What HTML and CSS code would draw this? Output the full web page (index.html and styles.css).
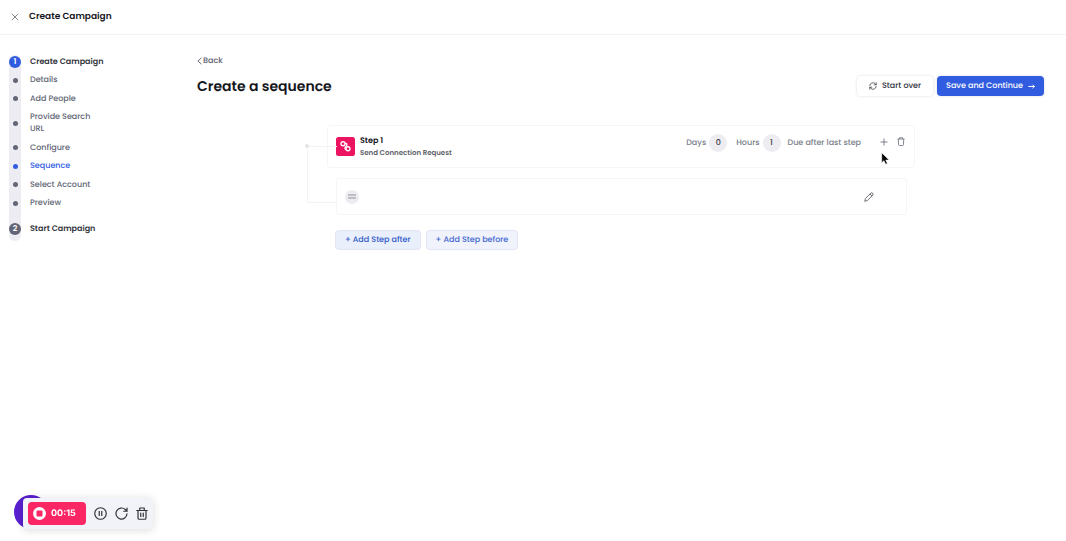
FILE: index.html
```html
<!DOCTYPE html>
<html lang="en">
<head>
<meta charset="utf-8">
<meta name="viewport" content="width=device-width, initial-scale=1">
<title>Create Campaign</title>
<link rel="stylesheet" href="styles.css">
</head>
<body>
<header class="topbar">
  <button class="icon-btn" type="button" aria-label="Close">
    <svg width="8" height="8" viewBox="0 0 8 8" fill="none" stroke="#777a82" stroke-width="0.9"><path d="M.8.8l6.4 6.4M7.2.8L.8 7.2"/></svg>
  </button>
  <span class="topbar-title">Create Campaign</span>
</header>
<div class="page">
  <nav class="progress" aria-label="Progress">
    <div class="stage"><span class="badge active">1</span><a href="#create">Create Campaign</a></div>
    <ul class="stage-items">
      <li><a href="#details">Details</a></li>
      <li><a href="#people">Add People</a></li>
      <li><a href="#url">Provide Search URL</a></li>
      <li><a href="#configure">Configure</a></li>
      <li class="current"><a href="#sequence">Sequence</a></li>
      <li><a href="#account">Select Account</a></li>
      <li><a href="#preview">Preview</a></li>
    </ul>
    <div class="stage"><span class="badge">2</span><a href="#start">Start Campaign</a></div>
  </nav>
  <main class="content">
    <a class="back" href="#back">
      <svg width="5" height="8" viewBox="0 0 5 8" fill="none" stroke="#5c6070" stroke-width="0.9"><path d="M4.5.8L.9 4l3.6 3.2"/></svg>
      Back
    </a>
    <div class="heading">
      <h1>Create a sequence</h1>
      <div class="actions">
        <button class="btn" type="button">
          <svg width="8" height="8" viewBox="0 0 20 20" fill="none" stroke="#3b3e48" stroke-width="1.9" stroke-linecap="round" stroke-linejoin="round"><path d="M2 9a8 8 0 0 1 14-4.500L18 7M18 2v5h-5M18 11a8 8 0 0 1-14 4.500L2 13M2 18v-5h5"/></svg>
          Start over
        </button>
        <button class="btn primary" type="button">
          Save and Continue
          <svg width="7" height="7" viewBox="0 0 14 14" fill="none" stroke="#fff" stroke-width="2" stroke-linecap="round" stroke-linejoin="round"><path d="M1.500 7h11M9.500 4l3 3-3 3"/></svg>
        </button>
      </div>
    </div>
    <section class="sequence">
      <article class="step">
        <svg class="step-icon" width="19" height="19" viewBox="0 0 38 38" fill="none">
          <rect width="38" height="38" rx="5" fill="#ec1460"/>
          <g stroke="#fff" stroke-width="2.600"><circle cx="14" cy="13.500" r="4"/><circle cx="24" cy="23.500" r="4"/><path d="M18 13c4.500-1 5 3 2 5.500s-3 6.500 1 6.500"/></g>
        </svg>
        <div class="step-text">
          <h2>Step 1</h2>
          <p>Send Connection Request</p>
        </div>
        <div class="timing">
          <label for="days">Days</label><input id="days" type="text" value="0">
          <label for="hours" class="hours">Hours</label><input id="hours" type="text" value="1">
          <span>Due after last step</span>
        </div>
        <div class="step-tools">
          <button class="icon-btn" type="button" aria-label="Add">
            <svg width="8" height="8" viewBox="0 0 8 8" fill="none" stroke="#71757f" stroke-width="0.900"><path d="M4 .5v7M.5 4h7"/></svg>
          </button>
          <button class="icon-btn" type="button" aria-label="Delete step">
            <svg width="8" height="9" viewBox="0 0 16 18" fill="none" stroke="#71757f" stroke-width="1.700" stroke-linejoin="round"><path d="M1 4h14M5 4V1.500h6V4M2.500 4l.7 11.500q.1 1.500 1.500 1.500h6.600q1.400 0 1.500-1.500L13.500 4"/></svg>
          </button>
        </div>
      </article>
      <article class="message">
        <span class="handle"><svg width="8" height="5" viewBox="0 0 8 5" stroke="#8d9099"><path d="M0 1h8M0 4h8"/></svg></span>
        <button class="icon-btn" type="button" aria-label="Edit">
          <svg width="10" height="10" viewBox="0 0 20 20" fill="none" stroke="#555862" stroke-width="1.700" stroke-linejoin="round"><path d="M1.500 18.500l1.300-5.300L14 2q1.700-1.200 3.200.3T17.800 6L6.700 17.200zM12 4l4 4"/></svg>
        </button>
      </article>
      <div class="add-row">
        <button class="btn soft hover" type="button">+ Add Step after</button>
        <button class="btn soft" type="button">+ Add Step before</button>
      </div>
    </section>
  </main>
</div>
<svg class="pointer" width="9" height="13" viewBox="0 0 9 13"><path d="M.7.7v10l2.300-2 1.600 3.600 1.800-.8-1.600-3.400h3.300z" fill="#050505" stroke="#fff" stroke-width="0.600"/></svg>
<div class="bubble"></div>
<div class="recorder">
  <button class="stop" type="button">
    <svg width="13" height="13" viewBox="0 0 13 13"><circle cx="6.500" cy="6.500" r="6.500" fill="#fff"/><rect x="3.500" y="3.500" width="6" height="6" rx="1" fill="#fb2765"/></svg>
    00:15
  </button>
  <button class="icon-btn" type="button" aria-label="Pause">
    <svg width="13" height="13" viewBox="0 0 26 26" fill="none" stroke="#30333b" stroke-width="2.400"><circle cx="13" cy="13" r="11.500"/><path d="M10.500 8v10M15.500 8v10"/></svg>
  </button>
  <button class="icon-btn" type="button" aria-label="Restart">
    <svg width="13" height="13" viewBox="0 0 26 26" fill="none" stroke="#30333b" stroke-width="2.400" stroke-linecap="round" stroke-linejoin="round"><path d="M24 13.500A11 11 0 1 1 20.500 5L24 8.500M24 2v6.500h-6.500"/></svg>
  </button>
  <button class="icon-btn" type="button" aria-label="Discard">
    <svg width="12" height="13" viewBox="0 0 24 26" fill="none" stroke="#30333b" stroke-width="2.400" stroke-linejoin="round" stroke-linecap="round"><path d="M1.500 7h21M7.500 7V2h9v5M4 7v15q0 2.500 2.500 2.500h11Q20 24.500 20 22V7M9.500 12v7M14.500 12v7"/></svg>
  </button>
</div>
</body>
</html>
```
FILE: styles.css
```css
* { box-sizing: border-box; }

body {
  margin: 0;
  min-height: 100vh;
  background: #fff;
  color: #15161c;
  font: 500 8px/12px Poppins, Inter, sans-serif;
  text-rendering: geometricPrecision;
  border-bottom: 1px solid #fafafb;
}

a { color: inherit; text-decoration: none; }
h1, h2, p, ul { margin: 0; padding: 0; }
button, input { font: inherit; color: inherit; text-rendering: inherit; }
svg { display: block; flex: none; }

.icon-btn {
  display: grid;
  place-items: center;
  padding: 0;
  border: 0;
  background: none;
}

.topbar {
  display: flex;
  align-items: center;
  gap: 10px;
  height: 35px;
  padding: 0 11px;
  border-bottom: 1px solid #f3f3f5;
}
.topbar-title { font-size: 9px; font-weight: 600; }

.page { display: flex; align-items: flex-start; }

.progress {
  position: relative;
  width: 94px;
  margin: 20px 94px 0 9px;
  padding-bottom: 6px;
  color: #626675;
}
.progress::before {
  content: "";
  position: absolute;
  z-index: -1;
  inset: 0 auto 0 0;
  width: 12px;
  border-radius: 6px;
  background: #ececf2;
}
.stage {
  display: flex;
  align-items: center;
  gap: 9px;
  height: 13px;
  color: #353742;
  font-weight: 600;
  white-space: nowrap;
}
.badge {
  display: grid;
  flex: none;
  place-items: center;
  width: 12px;
  height: 12px;
  border-radius: 50%;
  background: #626575;
  color: #fff;
}
.badge.active { background: #315ce0; }
.stage-items {
  display: flex;
  flex-direction: column;
  justify-content: space-between;
  min-height: 135px;
  margin: 6px 0 13px;
  list-style: none;
}
.stage-items li {
  display: flex;
  align-items: center;
  gap: 12px;
  padding-left: 4px;
}
.stage-items li::before {
  content: "";
  flex: none;
  width: 5px;
  height: 5px;
  border-radius: 50%;
  background: currentColor;
}
.stage-items .current { color: #315ce0; }

.content { flex: 1; padding: 20px 22px 0 0; }
.back {
  display: inline-flex;
  align-items: center;
  gap: 1px;
  color: #5c6070;
}
.heading {
  display: flex;
  align-items: center;
  justify-content: space-between;
  margin-top: 7px;
}
h1 { font-size: 14px; line-height: 20px; font-weight: 600; }
.actions { display: flex; gap: 4px; }

.btn {
  display: flex;
  align-items: center;
  justify-content: center;
  gap: 5px;
  height: 20px;
  padding: 0 12px;
  border: 0;
  border-radius: 4px;
  background: #fff;
  color: #30323c;
  box-shadow: 0 0 3px #00000024;
  white-space: nowrap;
}
.btn.primary {
  padding: 0 9px;
  background: #315ce0;
  color: #fff;
}
.btn.soft {
  padding: 0 9px;
  border: 1px solid #e2e5f3;
  background: #f0f3fc;
  color: #4466d2;
  box-shadow: none;
}
.btn.soft.hover { background: #eaeffc; color: #315ac8; }

.sequence { margin: 29px 129px 0 130px; }
.step {
  position: relative;
  display: flex;
  align-items: center;
  height: 43px;
  padding: 0 9px 0 8px;
  border: 1px solid #f6f6f8;
  border-radius: 3px;
}
.step::before {
  content: "";
  position: absolute;
  top: 20px;
  left: -21px;
  width: 29px;
  height: 56px;
  border-left: 1px solid #f3f3f5;
  border-bottom: 1px solid #f3f3f5;
  background: linear-gradient(#f3f3f5, #f3f3f5) top / 100% 1px no-repeat;
}
.step::after {
  content: "";
  position: absolute;
  top: 18px;
  left: -23px;
  width: 4px;
  height: 4px;
  border-radius: 50%;
  background: #e6e6e9;
}
.step-text { margin-left: 5px; }
h2 { font-size: 8px; line-height: 13px; font-weight: 600; }
.step-text p { color: #5b5d66; font-size: 7px; line-height: 13px; font-weight: 600; }
.timing {
  display: flex;
  align-items: center;
  gap: 3px;
  margin: 0 19px 8px auto;
  color: #7b7f8b;
}
.timing input {
  width: 18px;
  height: 18px;
  padding: 0;
  border: 0;
  border-radius: 50%;
  background: #ececf1;
  color: #353741;
  text-align: center;
}
.timing .hours { margin-left: 6px; }
.timing span { margin-left: 4px; }
.step-tools { display: flex; gap: 9px; margin-bottom: 10px; }

.message {
  display: flex;
  align-items: center;
  justify-content: space-between;
  height: 37px;
  margin: 10px 8px 0 9px;
  padding: 0 32px 0 8px;
  border: 1px solid #f6f6f8;
  border-radius: 3px;
}
.handle {
  display: grid;
  place-items: center;
  width: 14px;
  height: 14px;
  border-radius: 50%;
  background: #ececf1;
}
.add-row { display: flex; gap: 5px; margin: 15px 8px 0; }

.pointer { position: absolute; top: 152px; left: 881px; }

.bubble, .recorder { position: fixed; }
.bubble {
  bottom: 12px;
  left: 14px;
  width: 34px;
  height: 34px;
  border-radius: 50%;
  background: #5a20cf;
}
.recorder {
  bottom: 12px;
  left: 23px;
  display: flex;
  align-items: center;
  gap: 8px;
  height: 31px;
  padding: 0 5px;
  border-radius: 4px;
  background: #f1f3f8;
  box-shadow: 0 1px 8px #00000026;
}
.stop {
  display: flex;
  align-items: center;
  gap: 5px;
  height: 23px;
  padding: 0 10px 0 5px;
  border: 0;
  border-radius: 4px;
  background: #fb2765;
  color: #fff;
  font-family: Inter, sans-serif;
  font-size: 9px;
  font-weight: 700;
}
```
